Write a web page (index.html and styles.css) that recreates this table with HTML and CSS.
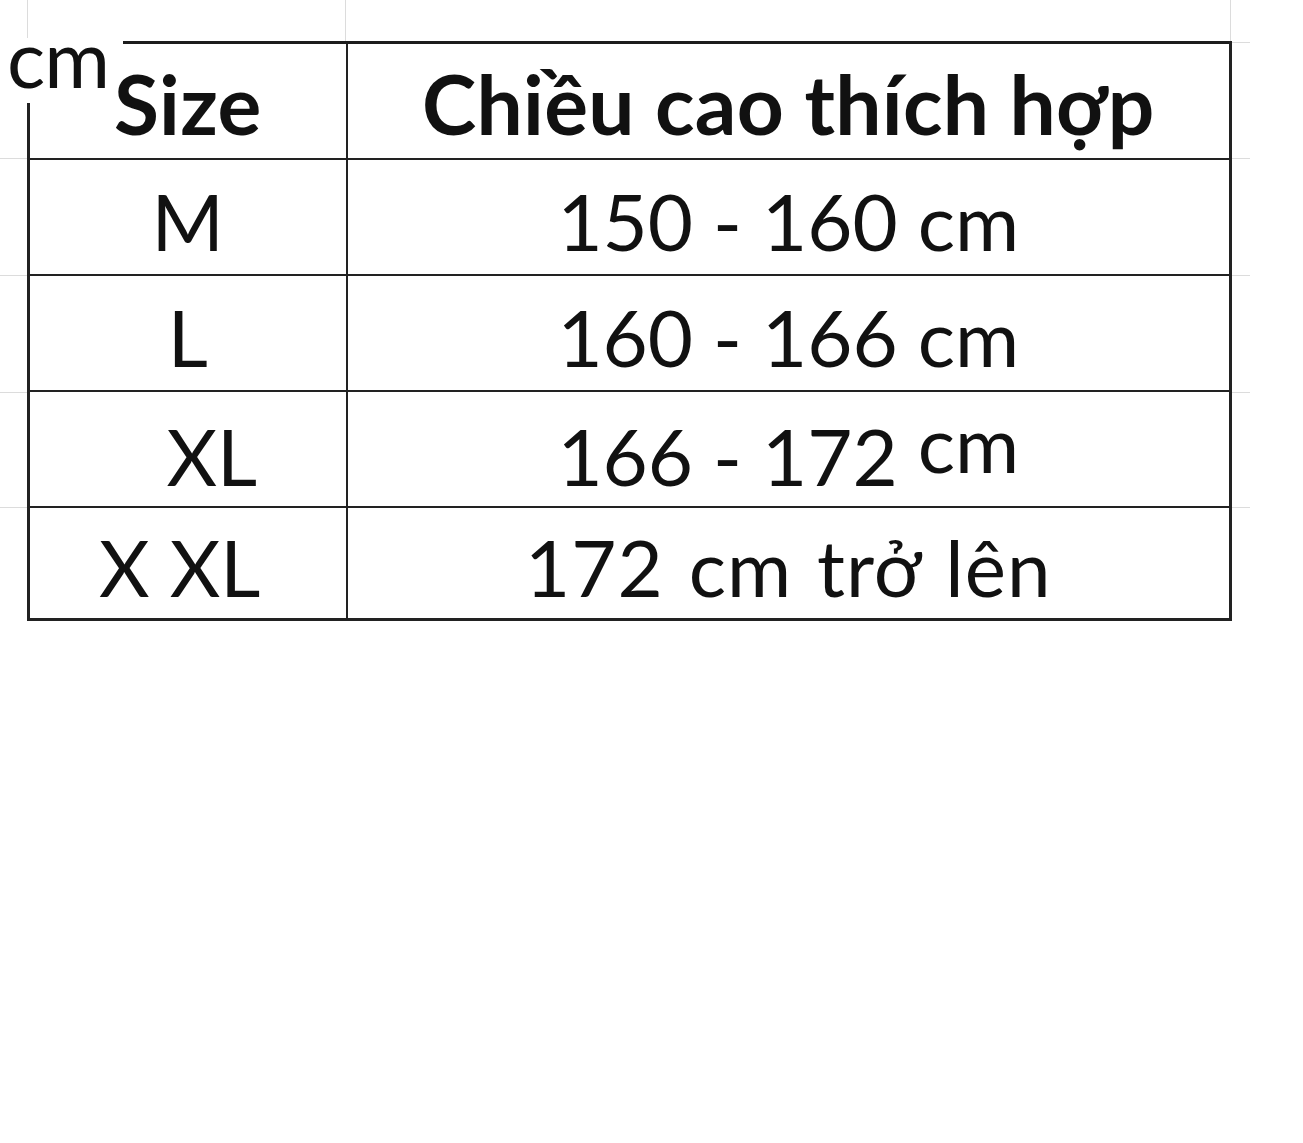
FILE: index.html
```html
<!DOCTYPE html>
<html lang="vi">
<head>
<meta charset="utf-8">
<title>Bảng size</title>
<link rel="stylesheet" href="styles.css">
</head>
<body>
<div class="sheet">
  <div class="corner">cm</div>
  <table class="size-table">
    <colgroup>
      <col class="c1">
      <col class="c2">
    </colgroup>
    <tr class="head">
      <th>Size</th>
      <th>Chiều cao thích hợp</th>
    </tr>
    <tr>
      <td>M</td>
      <td>150 - 160 cm</td>
    </tr>
    <tr>
      <td>L</td>
      <td>160 - 166 cm</td>
    </tr>
    <tr class="row-xl">
      <td class="shift-r">XL</td>
      <td>166 - 172 <span class="raised">cm</span></td>
    </tr>
    <tr class="last">
      <td class="shift-l">X<span class="gap"></span>XL</td>
      <td class="wide">172 cm trở lên</td>
    </tr>
  </table>
</div>
</body>
</html>
```

FILE: styles.css
```css
html, body {
  margin: 0;
  padding: 0;
  background: #ffffff;
}

body {
  font-family: Lato, "Open Sans", "Liberation Sans", sans-serif;
  color: #111111;
}

.sheet {
  position: relative;
  width: 1250px;
  height: 640px;
  padding-top: 41px;
  box-sizing: border-box;
  background-repeat: no-repeat;
  background-image:
    linear-gradient(#dcdcdc, #dcdcdc),
    linear-gradient(#dcdcdc, #dcdcdc),
    linear-gradient(#dcdcdc, #dcdcdc),
    linear-gradient(#dcdcdc, #dcdcdc),
    linear-gradient(#dcdcdc, #dcdcdc),
    linear-gradient(#dcdcdc, #dcdcdc),
    linear-gradient(#dcdcdc, #dcdcdc),
    linear-gradient(#dcdcdc, #dcdcdc),
    linear-gradient(#dcdcdc, #dcdcdc),
    linear-gradient(#dcdcdc, #dcdcdc),
    linear-gradient(#dcdcdc, #dcdcdc),
    linear-gradient(#dcdcdc, #dcdcdc);
  background-size:
    1px 42px,
    1px 42px,
    1px 42px,
    27px 1px,
    27px 1px,
    27px 1px,
    27px 1px,
    18px 1px,
    18px 1px,
    18px 1px,
    18px 1px,
    18px 1px;
  background-position:
    27px 0,
    345px 0,
    1230px 0,
    0 158px,
    0 275px,
    0 392px,
    0 507px,
    1232px 42px,
    1232px 158px,
    1232px 275px,
    1232px 392px,
    1232px 507px;
}

/* "cm" label that breaks the table's top-left corner */
.corner {
  position: absolute;
  left: 0;
  top: 28px;
  width: 123px;
  height: 75px;
  font-size: 80px;
  line-height: 58px;
  padding-left: 7px;
  box-sizing: border-box;
  letter-spacing: -1px;
  z-index: 1;
}

.corner::before {
  content: "";
  position: absolute;
  left: 20px;
  top: 10px;
  width: 103px;
  height: 8px;
  background: #ffffff;
  z-index: -1;
}

.corner::after {
  content: "";
  position: absolute;
  left: 20px;
  top: 10px;
  width: 14px;
  height: 65px;
  background: #ffffff;
  z-index: -1;
}

.size-table {
  margin-left: 27px;
  width: 1202px;
  border-collapse: collapse;
  border: 3px solid #1c1c1c;
  table-layout: fixed;
}

.c1 { width: 318px; }
.c2 { width: 884px; }

.size-table tr {
  height: 116px;
}

.size-table tr.last {
  height: 113px;
}

.size-table th,
.size-table td {
  border: 2px solid #222222;
  padding: 22px 0 0 0;
  text-align: center;
  vertical-align: top;
  font-size: 78px;
  line-height: 1;
  white-space: nowrap;
}

.size-table th {
  font-weight: 700;
  font-size: 82px;
  letter-spacing: 0.3px;
  padding-top: 18px;
}

.size-table th:first-child,
.size-table td:first-child {
  border-left-width: 3px;
}

.size-table th:last-child,
.size-table td:last-child {
  border-right-width: 3px;
}

.size-table tr.row-xl td {
  padding-top: 25px;
}

.size-table tr.last td {
  border-bottom-width: 3px;
  padding-top: 20px;
}

.size-table td.shift-r {
  padding-left: 48px;
}

.size-table td.shift-l {
  padding-right: 16px;
}

.size-table td.wide {
  letter-spacing: 1px;
  word-spacing: 4px;
}

.gap {
  display: inline-block;
  width: 20px;
  height: 50px;
  vertical-align: baseline;
}

.raised {
  vertical-align: 13px;
  line-height: 0;
}
```
